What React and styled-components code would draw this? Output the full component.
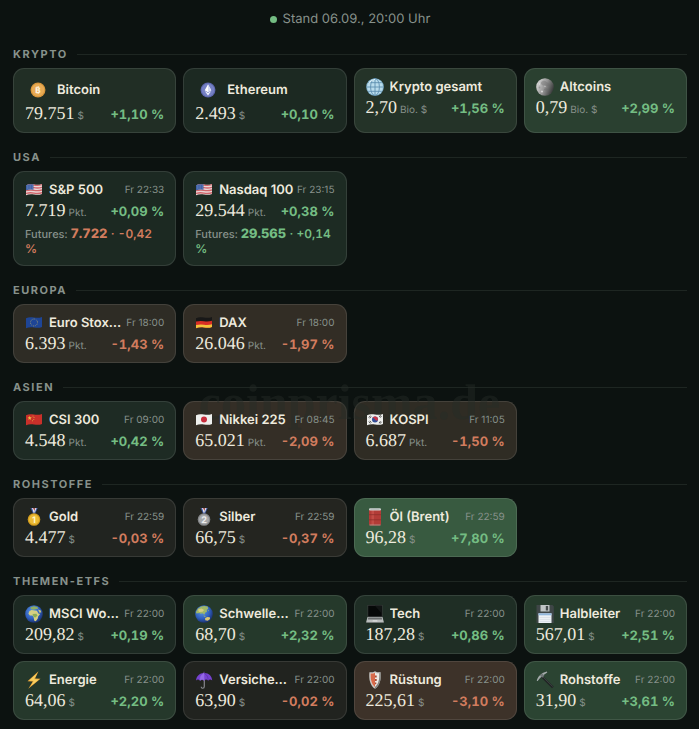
import React, { useId } from "react";
import styled, { createGlobalStyle } from "styled-components";

const GlobalStyle = createGlobalStyle`
  * {
    box-sizing: border-box;
  }
  body {
    margin: 0;
    background: #0c1210;
    font-family: Inter, "Liberation Sans", sans-serif;
    text-rendering: geometricPrecision;
    -webkit-font-smoothing: antialiased;
    color: #eeeade;
  }
`;

const Page = styled.main`
  position: relative;
  padding: 9px 12px 9px 13px;
`;

const Status = styled.p`
  margin: 0 0 18px;
  display: flex;
  align-items: center;
  justify-content: center;
  gap: 6px;
  font-size: 13px;
  line-height: 20px;
  color: #87918b;
`;

const StatusDot = styled.span`
  width: 7px;
  height: 7px;
  border-radius: 50%;
  background: #74bd83;
`;

const Section = styled.section`
  & + & {
    margin-top: 17px;
  }
`;

const SectionTitle = styled.h2`
  margin: 0 0 7px;
  display: flex;
  align-items: center;
  gap: 9px;
  font-size: 11px;
  line-height: 14px;
  font-weight: 700;
  letter-spacing: 0.14em;
  text-transform: uppercase;
  color: #87918b;
  &::after {
    content: "";
    flex: 1;
    height: 1px;
    background: #1e2622;
  }
`;

const Grid = styled.div`
  display: grid;
  grid-template-columns: repeat(4, minmax(0, 1fr));
  gap: 7px;
`;

const Card = styled.article`
  padding: 8px 11px;
  border: 1px solid rgba(255, 255, 255, 0.1);
  border-radius: 11px;
  background: ${(props) => props.$tone};
`;

const CardHead = styled.div`
  position: relative;
  z-index: 1;
  display: flex;
  align-items: center;
  gap: 2px;
`;

const IconBox = styled.span`
  flex: none;
  display: flex;
  align-items: center;
  justify-content: center;
  width: ${(props) => (props.$coin ? "26px" : "18px")};
  height: ${(props) => (props.$coin ? "26px" : "20px")};
  margin-right: 4px;
`;

const Name = styled.h3`
  flex: 1;
  min-width: 0;
  margin: 0;
  font-size: 13px;
  line-height: 20px;
  font-weight: 600;
  white-space: nowrap;
  overflow: hidden;
  text-overflow: ellipsis;
`;

const Time = styled.time`
  flex: none;
  font-size: 10px;
  line-height: 20px;
  color: #87918b;
`;

const Quote = styled.div`
  position: relative;
  z-index: 1;
  display: flex;
  align-items: baseline;
  justify-content: space-between;
  white-space: nowrap;
`;

const Price = styled.span`
  font-family: "Liberation Serif", serif;
  font-size: 18px;
  line-height: 21px;
`;

const Unit = styled.small`
  margin-left: 3px;
  font-family: Inter, "Liberation Sans", sans-serif;
  font-size: 10px;
  line-height: 1;
  color: #87918b;
`;

const Change = styled.span`
  font-size: 13px;
  line-height: 1;
  font-weight: 700;
  font-variant-numeric: tabular-nums;
  color: ${(props) => (props.$down ? "#d17c5e" : "#74bd83")};
`;

const Futures = styled.p`
  margin: 6px 0 0;
  font-size: 11px;
  line-height: 15px;
  font-weight: 500;
  font-variant-numeric: tabular-nums;
  color: #87918b;
`;

const FuturesValue = styled.span`
  font-size: 12px;
  line-height: 1;
  font-weight: 600;
  color: ${(props) => (props.$down ? "#d17c5e" : "#74bd83")};
  b {
    font-size: 13px;
    font-weight: 800;
  }
`;

const Watermark = styled.div`
  position: absolute;
  top: 375px;
  left: 0;
  right: 0;
  text-align: center;
  font-family: "Liberation Serif", serif;
  font-size: 50px;
  line-height: 54px;
  font-weight: 700;
  color: rgba(38, 44, 39, 0.45);
  pointer-events: none;
`;

const Svg = ({ size = 18, children }) => (
  <svg width={size} height={size} viewBox="0 0 18 18" aria-hidden="true">
    {children}
  </svg>
);

const Flag = ({ children }) => {
  const id = useId();
  return (
    <Svg>
      <clipPath id={id}>
        <path d="M1 4.2C3.5 3 6 3.1 9 3.6S14.500 3.900 17 2.900V13C14.500 14.100 12 14 9 13.500S3.500 13.200 1 14.300Z" />
      </clipPath>
      <g clipPath={`url(#${id})`}>{children}</g>
    </Svg>
  );
};

const Bitcoin = () => (
  <Svg size={16}>
    <circle cx="9" cy="9" r="8.400" fill="#d8963c" />
    <circle cx="9" cy="9" r="7" fill="#e8ab55" />
    <text
      x="9"
      y="12.300"
      fontSize="9"
      fontWeight="800"
      textAnchor="middle"
      fill="#fff3dc"
    >
      B
    </text>
    <path d="M8 4.600v1.500M9.700 4.600v1.500M8 12v1.500M9.700 12v1.500" stroke="#fff3dc" strokeWidth=".8" />
  </Svg>
);

const Ethereum = () => (
  <Svg size={16}>
    <circle cx="9" cy="9" r="8.400" fill="#5c66ad" />
    <circle cx="9" cy="9" r="7.200" fill="#7580c4" />
    <path d="M9 2.800 5.300 9.200 9 11.400l3.700-2.200z" fill="#fff" />
    <path d="M9 2.800v8.600l3.700-2.200z" fill="#d7dcf5" />
    <path d="M5.300 10.200 9 15.200l3.700-5L9 12.400z" fill="#f2f4ff" />
  </Svg>
);

const GlobeGrid = () => (
  <Svg>
    <circle cx="9" cy="9" r="8.800" fill="#7fb0cb" />
    <circle cx="9" cy="9" r="8" fill="#b9dcec" />
    <g fill="none" stroke="#5d8fb0" strokeWidth=".9">
      <path d="M9 .5v17M.5 9h17M2.300 4.700h13.400M2.300 13.300h13.400" />
      <ellipse cx="9" cy="9" rx="4.400" ry="8.500" />
    </g>
    <path d="M3 5.500C4.500 2.800 7 1.500 9 1.500" stroke="#e9f7fc" fill="none" />
  </Svg>
);

const Moon = () => (
  <Svg>
    <defs>
      <linearGradient id="moon" x1="0" y1=".3" x2="1" y2=".7">
        <stop offset="0" stopColor="#d9d9d9" />
        <stop offset=".5" stopColor="#929292" />
        <stop offset="1" stopColor="#303232" />
      </linearGradient>
    </defs>
    <circle cx="9" cy="9" r="8.800" fill="url(#moon)" />
    <g fill="#6c6c6c" opacity=".4">
      <path d="M5 4.500c1-2 4-2.500 5-1s3 1 3.500 3-2 2.500-3.500 1-2 .5-3 0-2.500-1.500-2-3z" />
      <circle cx="3.500" cy="9.500" r=".9" />
      <path d="M8 11c1-1 3.500-1 4 .3s-1.500 1.700-2.500 1.200S7.500 12 8 11z" />
    </g>
    <g fill="#eee" opacity=".7">
      <circle cx="6" cy="13.500" r="1.100" />
      <circle cx="9" cy="8.500" r=".6" />
      <circle cx="3.500" cy="6" r=".7" />
    </g>
  </Svg>
);

const UsFlag = () => (
  <Flag>
    <path d="M0 2h18v14H0z" fill="#ead5d5" />
    <path
      d="M0 4.500Q4.500 3 9 4t9-.7M0 7.300Q4.500 5.800 9 6.700t9-.7M0 10Q4.500 8.500 9 9.400t9-.7M0 12.700Q4.500 11.200 9 12.100t9-.7"
      fill="none"
      stroke="#d0656b"
      strokeWidth="1.300"
    />
    <path d="M0 2h8.500v6.800Q4 8.200 0 9.600z" fill="#3f62a6" />
    <path d="M2 5h6M2 7h6" stroke="#91a8d1" strokeWidth=".7" strokeDasharray=".7 1" />
  </Flag>
);

const EuFlag = () => (
  <Flag>
    <path d="M0 2h18v14H0z" fill="#1e4596" />
    <circle cx="9" cy="8.500" r="3.500" fill="none" stroke="#a8a36c" strokeWidth=".9" strokeDasharray=".8 1.030" />
  </Flag>
);

const DeFlag = () => (
  <Flag>
    <path d="M0 2h18v14H0z" fill="#181818" />
    <path d="M0 7.800Q4.500 6.400 9 7.200t9-.7V16H0z" fill="#d82d25" />
    <path d="M0 11.300Q4.500 9.900 9 10.700t9-.7V16H0z" fill="#f2c33c" />
  </Flag>
);

const CnFlag = () => (
  <Flag>
    <path d="M0 2h18v14H0z" fill="#c9302a" />
    <path
      d="m4.700 4.900.6 1.400 1.500.1-1.200 1 .4 1.500-1.300-.8-1.300.8.4-1.500-1.200-1 1.500-.1z"
      fill="#efbf45"
    />
    <g fill="#e5ae42">
      <circle cx="8" cy="4.900" r=".5" />
      <circle cx="9" cy="6.500" r=".5" />
      <circle cx="8.800" cy="8.400" r=".5" />
      <circle cx="7.500" cy="9.700" r=".5" />
    </g>
  </Flag>
);

const JpFlag = () => (
  <Flag>
    <path d="M0 2h18v14H0z" fill="#eeefed" />
    <circle cx="9" cy="8.500" r="3" fill="#c72d3d" />
  </Flag>
);

const KrFlag = () => (
  <Flag>
    <path d="M0 2h18v14H0z" fill="#eeefed" />
    <circle cx="9" cy="8.500" r="3" fill="#334f96" />
    <path d="M6.300 7.200a3 3 0 0 1 5.700 1.500c-.8 1.300-2.300 1-3-.2S7 6.900 6.300 7.200z" fill="#ca3546" />
    <path
      d="m2.800 6.600 1.500-1.900M3.800 7.300l1.400-1.900M13 4.800l1.500 1.900M14 4.100l1.500 1.900M2.800 10.500l1.500 1.900M3.900 9.800l1.400 1.900M13 12.100l1.500-1.900M14 12.700l1.500-1.900"
      stroke="#333"
      strokeWidth=".8"
    />
  </Flag>
);

const Medal = ({ place, rim, face, ink }) => (
  <Svg>
    <path d="M5.500 0h2.400l2.600 5.500H8z" fill="#3c57a3" />
    <path d="M12.700 0h-2.400L7.700 5.500h2.500z" fill="#415caa" />
    <path d="M7 0h1.400l1.300 3L8.700 5zM11.500 0h-1.200L9 3l.7 2z" fill="#e9e5e5" />
    <path d="M8.300 0h1.800l-.9 2.800z" fill="#b9494c" />
    <circle cx="9" cy="11.500" r="6.300" fill={rim} />
    <circle cx="9" cy="11.500" r="5" fill={face} />
    <text x="9" y="14.700" fontSize="9" fontWeight="700" textAnchor="middle" fill={ink}>
      {place}
    </text>
  </Svg>
);

const GoldMedal = () => <Medal place="1" rim="#d29d1f" face="#ecbb35" ink="#fff6c4" />;
const SilverMedal = () => <Medal place="2" rim="#858789" face="#a6a8aa" ink="#eceded" />;

const OilDrum = () => (
  <Svg>
    <rect x="3" y="1" width="12" height="16.500" rx="1.500" fill="#b23c37" />
    <path d="M5.500 2h2.500v15H5.500z" fill="#c24d46" />
    <path d="M3 6.700h12M3 11.800h12" stroke="#8f2f2b" strokeWidth=".8" />
    <rect x="3" y=".3" width="12" height="2.200" rx="1.100" fill="#d0d5d3" />
    <path d="M4.500 1.400h9" stroke="#a4afad" strokeWidth=".6" />
    <path d="M3.500 17h11" stroke="#b99c98" strokeWidth=".8" />
  </Svg>
);

const Globe = ({ children }) => {
  const id = useId();
  return (
    <Svg>
      <defs>
        <radialGradient id={id} cx=".4" cy=".35" r=".65">
          <stop offset="0" stopColor="#5d98e4" />
          <stop offset=".65" stopColor="#2f5fbd" />
          <stop offset="1" stopColor="#1b3373" />
        </radialGradient>
      </defs>
      <circle cx="9" cy="9" r="8.800" fill={`url(#${id})`} />
      {children}
    </Svg>
  );
};

const GlobeAfrica = () => (
  <Globe>
    <path d="M5.500 2.200 9 1.200l3.500.7.700 1.800-2.800.6-2 .4-2.600-.6z" fill="#8fae63" />
    <path
      d="M4.300 6.200 6.500 5l3.200.6 2.200.1 1.500 2.800 1.700.5-2 2.500-.3 2-2 2.700-1.500-.4-.6-3.300-1.200-2.100-2.600.2-1.500-1.900z"
      fill="#d6cf83"
    />
    <path d="m7.500 9 3.800-.3 1.200 1.900-2 2-1.900-.5z" fill="#8aac58" />
    <path d="m13 4.500 2.500.7.900 2-1.900.6z" fill="#c9c37b" />
  </Globe>
);

const GlobeAsia = () => (
  <Globe>
    <path
      d="M3 3.500C6 .8 9.500.5 12.500 1.500l.8 2-1.500 1.400.1 2-1.600.7-1 2.200-1.800-1.600-1.700.5L4.400 8l-2.900.5L.9 7z"
      fill="#9fb768"
    />
    <path d="m3 4.500 3.500-1.100 2.600 1.700-1.600 1.700-3.500.1z" fill="#d5cc83" />
    <path d="m10 13.200 2.300-1.200 2.500.3.300 1.700-2.300 1.700-2.500-.5z" fill="#d9c673" />
    <path d="m8.300 10.600 1.500.2 1 1-1 .1zM12.700 5.500l.9-.8.2 1.900z" fill="#9fb768" />
  </Globe>
);

const Laptop = () => (
  <Svg>
    <path d="M1.500 0h15v12h-15z" fill="#3a3d3d" />
    <path d="M2.200.7h13.600v10.600H2.200z" fill="#060808" />
    <path d="m9 .7 6.800 8v-8z" fill="#121515" />
    <path d="M1.500 12h15L17.800 17H.2z" fill="#b9bcbc" />
    <path d="M2.300 12.600h13.400l.5 2H1.800z" fill="#696d6d" />
    <path d="M6.800 15.200h4.400l.3 1.300h-5z" fill="#dadcdc" />
    <path d="M.2 17h17.600v.8H.2z" fill="#898c8c" />
  </Svg>
);

const Floppy = () => (
  <Svg>
    <path d="M.5 0h16l1.300 1.500V18H.5z" fill="#3f4647" />
    <path d="M4.500 0h9v6.500h-9z" fill="#bfc4c5" />
    <path d="M9.800 1h2.300v4.500H9.800z" fill="#454c4d" />
    <path d="M2.500 8.300h13V18h-13z" fill="#edf1f5" />
    <path d="M2.500 8.300h13v2h-13z" fill="#92b8dd" />
    <path d="M3.500 12.500h11M3.500 14.500h11M3.500 16.500h11" stroke="#ccd5dd" strokeWidth=".5" />
  </Svg>
);

const Bolt = () => (
  <Svg>
    <path d="M13.500.3 2.500 10.300l5.300.3L3.300 17.800 15.500 7.800l-5.400-.3z" fill="#efa83a" />
    <path d="M12.200 2.200 4.200 9.600l4.700.2-3 5.300 7.900-6.700-4.900-.2z" fill="#f8d061" />
  </Svg>
);

const Umbrella = () => (
  <Svg>
    <path d="M9.300 5v10.500c0 2.300-3 2.300-3 .2" fill="none" stroke="#85878c" strokeWidth="1.200" />
    <path d="M1 9.500C1.300 5 4.500 2.200 9 2s8 3 8.200 7.500c-1.300-1.300-2.700-1.300-4 0-1.300-1.300-2.800-1.300-4.100 0-1.300-1.300-2.800-1.300-4.100 0-1.300-1.300-2.700-1.300-4 0z" fill="#7642d0" />
    <path d="M9 2C6 3.800 5 6 5 9.500c1.300-1.300 2.800-1.300 4.100 0zM9 .7V2" fill="#9569e7" stroke="#9569e7" strokeWidth=".5" />
    <path d="M9 2c3 1.800 4.200 4 4.200 7.500" fill="none" stroke="#5528a0" strokeWidth=".6" />
  </Svg>
);

const Shield = () => (
  <Svg>
    <path d="M9 .2c2 1.200 3.800 1.300 5.600 1 .6 7-.5 13-5.600 16.600C3.900 14.200 2.800 8.200 3.400 1.200 5.200 1.500 7 1.400 9 .2z" fill="#c7c8c6" />
    <path d="M9 1.700c1.500.8 3 1 4.300.8.300 5.700-.7 10.500-4.300 13.500-3.600-3-4.600-7.800-4.300-13.500C6 2.700 7.500 2.500 9 1.700z" fill="#eeeae4" />
    <path d="M9 1.700V16c-3.600-3-4.600-7.800-4.300-13.500C6 2.700 7.500 2.500 9 1.700z" fill="#d96a4a" />
    <path d="M9 4.500h1.700v2H9zM9 8h1.700v2H9zM9 11.500h1.300v1.700H9z" fill="#aa4b37" />
    <path d="M14.600 1.200c.6 7-.5 13-5.600 16.600V16c3.600-3 4.600-7.800 4.300-13.500z" fill="#83837f" />
  </Svg>
);

const Pickaxe = () => (
  <Svg>
    <path d="m6.200 4.500 11.500 11-1.700 1.800L4.800 6z" fill="#202424" />
    <path d="m6.500 5.500 10.200 10" stroke="#484c4d" strokeWidth=".7" />
    <path d="M.8 10C1.300 6.300 4.600 2 10.800.5l.5 1C7.800 3.400 4 6.500 1.700 10z" fill="#a3aaaa" />
    <path d="m4 4.500 2.200-2 2.200 2.200-2.200 2.100z" fill="#707777" />
  </Svg>
);

const sections = [
  {
    title: "Krypto",
    items: [
      { name: "Bitcoin", icon: Bitcoin, coin: true, price: "79.751", unit: "$", change: "+1,10 %", tone: "#212e25" },
      { name: "Ethereum", icon: Ethereum, coin: true, price: "2.493", unit: "$", change: "+0,10 %", tone: "#1c2922" },
      { name: "Krypto gesamt", icon: GlobeGrid, price: "2,70", unit: "Bio. $", change: "+1,56 %", tone: "#243328" },
      { name: "Altcoins", icon: Moon, price: "0,79", unit: "Bio. $", change: "+2,99 %", tone: "#2a4030" },
    ],
  },
  {
    title: "USA",
    items: [
      {
        name: "S&P 500",
        icon: UsFlag,
        time: "Fr 22:33",
        price: "7.719",
        unit: "Pkt.",
        change: "+0,09 %",
        tone: "#1c2922",
        futures: { price: "7.722", change: "-0,42 %" },
      },
      {
        name: "Nasdaq 100",
        icon: UsFlag,
        time: "Fr 23:15",
        price: "29.544",
        unit: "Pkt.",
        change: "+0,38 %",
        tone: "#1d2b23",
        futures: { price: "29.565", change: "+0,14 %" },
      },
    ],
  },
  {
    title: "Europa",
    items: [
      { name: "Euro Stoxx 50", icon: EuFlag, time: "Fr 18:00", price: "6.393", unit: "Pkt.", change: "-1,43 %", tone: "#2e2c25" },
      { name: "DAX", icon: DeFlag, time: "Fr 18:00", price: "26.046", unit: "Pkt.", change: "-1,97 %", tone: "#322d25" },
    ],
  },
  {
    title: "Asien",
    items: [
      { name: "CSI 300", icon: CnFlag, time: "Fr 09:00", price: "4.548", unit: "Pkt.", change: "+0,42 %", tone: "#1e2b24" },
      { name: "Nikkei 225", icon: JpFlag, time: "Fr 08:45", price: "65.021", unit: "Pkt.", change: "-2,09 %", tone: "#342e26" },
      { name: "KOSPI", icon: KrFlag, time: "Fr 11:05", price: "6.687", unit: "Pkt.", change: "-1,50 %", tone: "#2f2c24" },
    ],
  },
  {
    title: "Rohstoffe",
    items: [
      { name: "Gold", icon: GoldMedal, time: "Fr 22:59", price: "4.477", unit: "$", change: "-0,03 %", tone: "#212420" },
      { name: "Silber", icon: SilverMedal, time: "Fr 22:59", price: "66,75", unit: "$", change: "-0,37 %", tone: "#242520" },
      { name: "Öl (Brent)", icon: OilDrum, time: "Fr 22:59", price: "96,28", unit: "$", change: "+7,80 %", tone: "#385a40" },
    ],
  },
  {
    title: "Themen-ETFs",
    items: [
      { name: "MSCI World", icon: GlobeAfrica, time: "Fr 22:00", price: "209,82", unit: "$", change: "+0,19 %", tone: "#1c2922" },
      { name: "Schwellenländer", icon: GlobeAsia, time: "Fr 22:00", price: "68,70", unit: "$", change: "+2,32 %", tone: "#25392b" },
      { name: "Tech", icon: Laptop, time: "Fr 22:00", price: "187,28", unit: "$", change: "+0,86 %", tone: "#1f2e25" },
      { name: "Halbleiter", icon: Floppy, time: "Fr 22:00", price: "567,01", unit: "$", change: "+2,51 %", tone: "#263b2c" },
      { name: "Energie", icon: Bolt, time: "Fr 22:00", price: "64,06", unit: "$", change: "+2,20 %", tone: "#25382b" },
      { name: "Versiche…", icon: Umbrella, time: "Fr 22:00", price: "63,90", unit: "$", change: "-0,02 %", tone: "#21231f" },
      { name: "Rüstung", icon: Shield, time: "Fr 22:00", price: "225,61", unit: "$", change: "-3,10 %", tone: "#3d3229" },
      { name: "Rohstoffe", icon: Pickaxe, time: "Fr 22:00", price: "31,90", unit: "$", change: "+3,61 %", tone: "#2b4432" },
    ],
  },
];

const isDown = (change) => change.startsWith("-");

const QuoteCard = ({ item }) => {
  const Icon = item.icon;
  return (
    <Card $tone={item.tone}>
      <CardHead>
        <IconBox $coin={item.coin}>
          <Icon />
        </IconBox>
        <Name>{item.name}</Name>
        {item.time ? <Time>{item.time}</Time> : null}
      </CardHead>
      <Quote>
        <Price>
          {item.price}
          <Unit>{item.unit}</Unit>
        </Price>
        <Change $down={isDown(item.change)}>{item.change}</Change>
      </Quote>
      {item.futures ? (
        <Futures>
          Futures:{" "}
          <FuturesValue $down={isDown(item.futures.change)}>
            <b>{item.futures.price}</b> · {item.futures.change}
          </FuturesValue>
        </Futures>
      ) : null}
    </Card>
  );
};

export default function App() {
  return (
    <>
      <GlobalStyle />
      <Page>
        <Status>
          <StatusDot />
          Stand 06.09., 20:00 Uhr
        </Status>
        {sections.map((section) => (
          <Section key={section.title}>
            <SectionTitle>{section.title}</SectionTitle>
            <Grid>
              {section.items.map((item) => (
                <QuoteCard key={item.name} item={item} />
              ))}
            </Grid>
          </Section>
        ))}
        <Watermark aria-hidden="true">coinprisma.de</Watermark>
      </Page>
    </>
  );
}
